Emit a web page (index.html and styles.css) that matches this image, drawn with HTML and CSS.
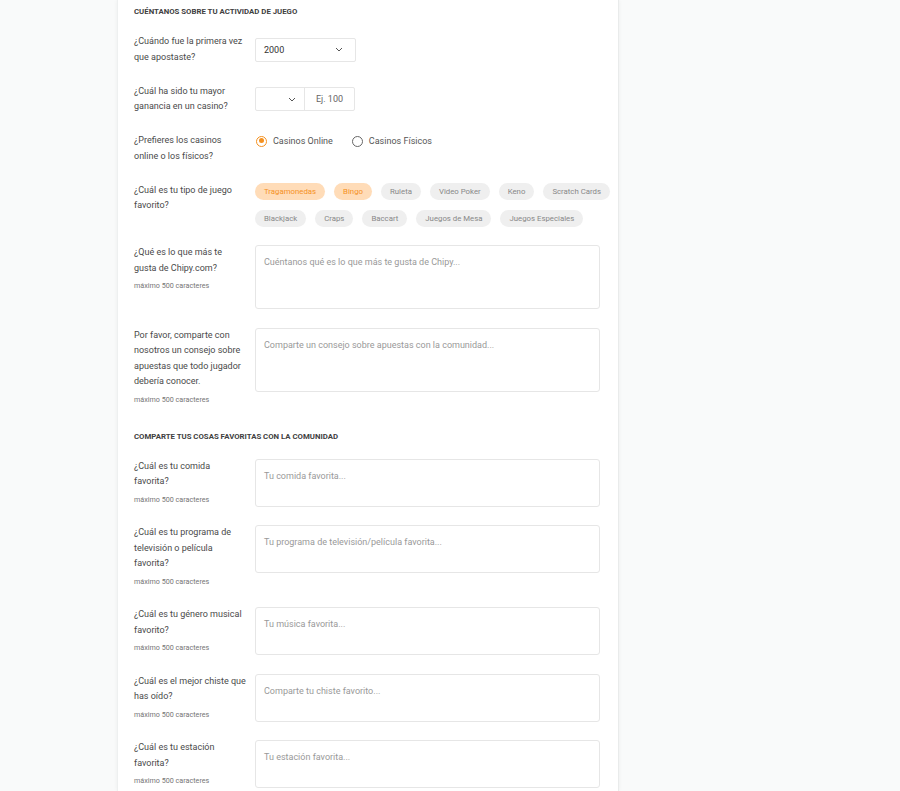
FILE: index.html
```html
<!DOCTYPE html>
<html lang="es">
<head>
<meta charset="utf-8">
<title>Perfil</title>
<link rel="stylesheet" href="styles.css">
</head>
<body>
<div class="page">
  <div class="card">
    <section class="section">
      <h2 class="section-title">Cuéntanos sobre tu actividad de juego</h2>

      <div class="row row-center">
        <div class="label"><span class="q">¿Cuándo fue la primera vez que apostaste?</span></div>
        <div class="select select-year">
          <span class="select-value">2000</span>
          <svg class="chev" viewBox="0 0 8 5" width="8" height="5"><path d="M1 1l3 3 3-3" fill="none" stroke="#555" stroke-width="1"/></svg>
        </div>
      </div>

      <div class="row row-center">
        <div class="label"><span class="q">¿Cuál ha sido tu mayor ganancia en un casino?</span></div>
        <div class="group">
          <div class="select select-cur">
            <span class="select-value"></span>
            <svg class="chev" viewBox="0 0 8 5" width="8" height="5"><path d="M1 1l3 3 3-3" fill="none" stroke="#555" stroke-width="1"/></svg>
          </div>
          <div class="group-input">Ej. 100</div>
        </div>
      </div>

      <div class="row">
        <div class="label"><span class="q">¿Prefieres los casinos online o los físicos?</span></div>
        <div class="radios">
          <label class="radio"><span class="dot checked"></span>Casinos Online</label>
          <label class="radio"><span class="dot"></span>Casinos Físicos</label>
        </div>
      </div>

      <div class="row">
        <div class="label"><span class="q">¿Cuál es tu tipo de juego favorito?</span></div>
        <div class="chips">
          <span class="chip on">Tragamonedas</span>
          <span class="chip on">Bingo</span>
          <span class="chip">Ruleta</span>
          <span class="chip">Video Poker</span>
          <span class="chip">Keno</span>
          <span class="chip">Scratch Cards</span>
          <span class="chip">Blackjack</span>
          <span class="chip">Craps</span>
          <span class="chip">Baccart</span>
          <span class="chip">Juegos de Mesa</span>
          <span class="chip">Juegos Especiales</span>
        </div>
      </div>

      <div class="row">
        <div class="label"><span class="q">¿Qué es lo que más te gusta de Chipy.com?</span><span class="hint">máximo 500 caracteres</span></div>
        <textarea class="area tall" placeholder="Cuéntanos qué es lo que más te gusta de Chipy..."></textarea>
      </div>

      <div class="row">
        <div class="label"><span class="q">Por favor, comparte con nosotros un consejo sobre apuestas que todo jugador debería conocer.</span><span class="hint">máximo 500 caracteres</span></div>
        <textarea class="area tall" placeholder="Comparte un consejo sobre apuestas con la comunidad..."></textarea>
      </div>
    </section>

    <section class="section section-2">
      <h2 class="section-title">Comparte tus cosas favoritas con la comunidad</h2>

      <div class="row">
        <div class="label"><span class="q">¿Cuál es tu comida favorita?</span><span class="hint">máximo 500 caracteres</span></div>
        <textarea class="area" placeholder="Tu comida favorita..."></textarea>
      </div>

      <div class="row">
        <div class="label"><span class="q">¿Cuál es tu programa de televisión o película favorita?</span><span class="hint">máximo 500 caracteres</span></div>
        <textarea class="area" placeholder="Tu programa de televisión/película favorita..."></textarea>
      </div>

      <div class="row">
        <div class="label"><span class="q">¿Cuál es tu género musical favorito?</span><span class="hint">máximo 500 caracteres</span></div>
        <textarea class="area" placeholder="Tu música favorita..."></textarea>
      </div>

      <div class="row">
        <div class="label"><span class="q">¿Cuál es el mejor chiste que has oído?</span><span class="hint">máximo 500 caracteres</span></div>
        <textarea class="area" placeholder="Comparte tu chiste favorito..."></textarea>
      </div>

      <div class="row">
        <div class="label"><span class="q">¿Cuál es tu estación favorita?</span><span class="hint">máximo 500 caracteres</span></div>
        <textarea class="area" placeholder="Tu estación favorita..."></textarea>
      </div>
    </section>
  </div>
</div>
</body>
</html>
```

FILE: styles.css
```css
* { box-sizing: border-box; }

html, body {
  margin: 0;
  padding: 0;
  background: #f9fafa;
  font-family: Roboto, "Liberation Sans", Arial, sans-serif;
  color: #444;
}

.page {
  padding-left: 117px;
}

.card {
  width: 502px;
  min-height: 791px;
  background: #fff;
  border-left: 1px solid #eef0f0;
  border-right: 1px solid #e9ebeb;
  box-shadow: 0 0 4px rgba(0, 0, 0, 0.05);
  padding: 6px 18px 0 16px;
}

.section-title {
  margin: 0 0 16px;
  font-size: 7.8px;
  line-height: 12px;
  font-weight: 700;
  text-transform: uppercase;
  color: #404040;
}

.section-2 {
  margin-top: 24px;
}

.row {
  display: flex;
  align-items: flex-start;
  margin-bottom: 18.5px;
}

.row-center {
  align-items: center;
}

.label {
  flex: 0 0 121px;
  padding-right: 9px;
  display: flex;
  flex-direction: column;
}

.q {
  font-size: 9px;
  line-height: 15.5px;
  color: #4a4a4a;
}

.hint {
  margin-top: 2px;
  font-size: 7.2px;
  line-height: 15px;
  color: #757575;
}

.select {
  height: 24px;
  border: 1px solid #e6e6e6;
  border-radius: 2px;
  display: flex;
  align-items: center;
  justify-content: space-between;
  padding: 0 12px 0 8px;
  font-size: 9px;
  color: #333;
}

.select-year {
  width: 101px;
}

.chev {
  display: block;
}

.group {
  display: flex;
  height: 24px;
  border: 1px solid #e6e6e6;
  border-radius: 2px;
  width: 100px;
}

.group .select {
  border: none;
  height: 22px;
  width: 49px;
  padding-right: 8px;
  border-right: 1px solid #e6e6e6;
  border-radius: 0;
}

.group-input {
  flex: 1;
  display: flex;
  align-items: center;
  padding-left: 11px;
  font-size: 9px;
  color: #666;
}

.radios {
  display: flex;
  gap: 18px;
  height: 16px;
  align-items: center;
}

.radio {
  display: flex;
  align-items: center;
  font-size: 9px;
  color: #555;
}

.dot {
  width: 11px;
  height: 11px;
  border-radius: 50%;
  border: 1.2px solid #666;
  margin-right: 6px;
  margin-left: 1px;
  position: relative;
  background: #fff;
}

.dot.checked {
  border-color: #f5911f;
  border-width: 1.5px;
}

.dot.checked::after {
  content: "";
  position: absolute;
  left: 1.5px;
  top: 1.5px;
  width: 5px;
  height: 5px;
  border-radius: 50%;
  background: #f5911f;
}

.chips {
  flex: 0 0 364px;
  width: 364px;
  display: flex;
  flex-wrap: wrap;
  gap: 10px 9px;
}

.chip {
  height: 17px;
  line-height: 17px;
  padding: 0 9px;
  border-radius: 9px;
  background: #efefef;
  color: #888;
  font-size: 7.8px;
  white-space: nowrap;
}

.chip.on {
  background: #ffdcb8;
  color: #f5911f;
}

.area {
  flex: 1;
  display: block;
  height: 48px;
  border: 1px solid #e6e6e6;
  border-radius: 3px;
  resize: none;
  padding: 9px 8px;
  font-family: Roboto, "Liberation Sans", Arial, sans-serif;
  font-size: 9px;
  line-height: 14px;
  color: #333;
  background: #fff;
  outline: none;
}

.area.tall {
  height: 64px;
}

.area::placeholder {
  color: #999;
}
```
